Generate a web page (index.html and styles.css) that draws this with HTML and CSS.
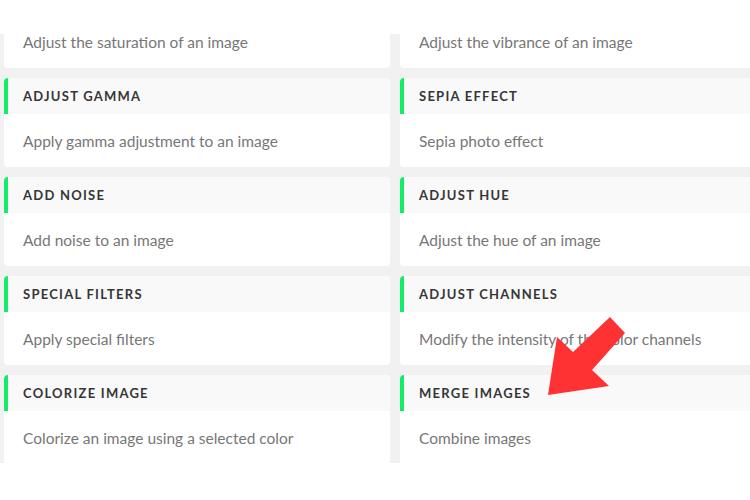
FILE: index.html
```html
<!doctype html>
<html lang="en">
<head>
  <meta charset="UTF-8" />
  <meta name="viewport" content="width=device-width, initial-scale=1.0" />
  <title>Image Tools</title>
  <link rel="stylesheet" href="styles.css">
</head>
<body>
  <!-- Top spacer -->
  <div class="top-bar"></div>

  <!-- Tool list -->
  <section class="tools">
    <div class="tool-grid">
      <!-- first row is scrolled past its header -->
      <div class="tool-card is-cut">
        <div class="tool-text">Adjust the saturation of an image</div>
      </div>
      <div class="tool-card is-cut">
        <div class="tool-text">Adjust the vibrance of an image</div>
      </div>
      <div class="tool-card">
        <div class="tool-title">Adjust Gamma</div>
        <div class="tool-text">Apply gamma adjustment to an image</div>
      </div>
      <div class="tool-card">
        <div class="tool-title">Sepia Effect</div>
        <div class="tool-text">Sepia photo effect</div>
      </div>
      <div class="tool-card">
        <div class="tool-title">Add Noise</div>
        <div class="tool-text">Add noise to an image</div>
      </div>
      <div class="tool-card">
        <div class="tool-title">Adjust Hue</div>
        <div class="tool-text">Adjust the hue of an image</div>
      </div>
      <div class="tool-card">
        <div class="tool-title">Special Filters</div>
        <div class="tool-text">Apply special filters</div>
      </div>
      <div class="tool-card">
        <div class="tool-title">Adjust Channels</div>
        <div class="tool-text">Modify the intensity of the color channels</div>
      </div>
      <div class="tool-card">
        <div class="tool-title">Colorize Image</div>
        <div class="tool-text">Colorize an image using a selected color</div>
      </div>
      <div class="tool-card">
        <div class="tool-title">Merge Images</div>
        <div class="tool-text">Combine images</div>
      </div>
    </div>

    <!-- Pointer arrow -->
    <svg class="pointer" width="750" height="429" viewBox="0 34 750 429">
      <polygon points="610,317 625,333 592,370 609,386 548,395 557,337 573,352" fill="#fe3232" />
    </svg>
  </section>

  <div class="bottom-bar"></div>
</body>
</html>
```

FILE: styles.css
```css
/* ------------------ Reset & Globals ------------------ */
* {
  margin: 0;
  padding: 0;
  box-sizing: border-box;
}
body {
  font-family: 'Lato', 'Open Sans', sans-serif;
  background: #fff;
  color: #333;
  width: 750px;
  overflow: hidden;
}

.top-bar {
  height: 34px;
  background: #fff;
}

/* ------------------ Tools ------------------ */
.tools {
  position: relative;
  height: 429px;
  background: #f1f1f1;
  overflow: hidden;
}
.tool-grid {
  display: grid;
  grid-template-columns: 386px 386px;
  column-gap: 10px;
  row-gap: 10px;
  padding-left: 4px;
  margin-top: -19px;
}
.tool-card {
  background: #fff;
  border-radius: 4px;
  height: 89px;
  display: flex;
  flex-direction: column;
  overflow: hidden;
}
.tool-card.is-cut {
  height: 53px;
  border-radius: 0 0 4px 4px;
}
.tool-title {
  height: 36px;
  display: flex;
  align-items: center;
  background: #f9f9f9;
  border-left: 4px solid #12ec66;
  padding-left: 15px;
  font-size: 13px;
  font-weight: 700;
  letter-spacing: 1.25px;
  text-transform: uppercase;
  color: #363636;
}
.tool-text {
  flex: 1;
  display: flex;
  align-items: center;
  padding: 0 19px;
  font-size: 15.5px;
  color: #777;
}

.pointer {
  position: absolute;
  left: 0;
  top: 0;
}

.bottom-bar {
  height: 37px;
  background: #fff;
}
```
